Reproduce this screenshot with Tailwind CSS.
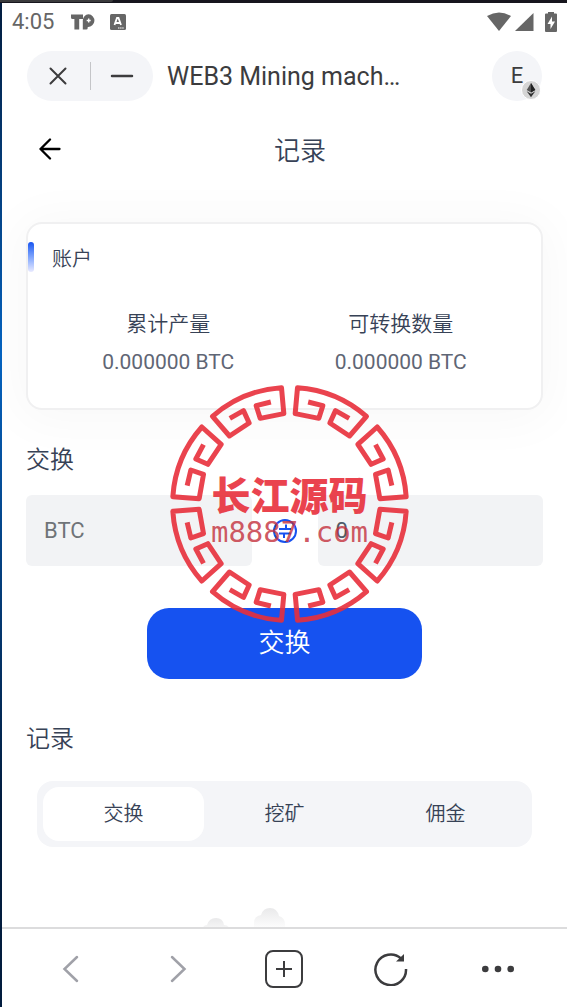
<!DOCTYPE html>
<html lang="zh-CN">
<head>
<meta charset="utf-8">
<meta name="viewport" content="width=device-width, initial-scale=1">
<title>记录</title>
<script src="https://cdn.jsdelivr.net/npm/@tailwindcss/browser@4"></script>
</head>
<body class="bg-white font-['Roboto','Noto_Sans_CJK_SC',sans-serif] text-[#374256]">
<div class="flex h-screen flex-col overflow-hidden">
<div class="h-[3px] flex-none bg-[#17161e]"><div class="h-[2px] w-1/5 rounded-br bg-[#3a3a3c]"></div></div>
<div class="flex min-h-0 flex-1">
<div class="w-[2px] shrink-0 bg-linear-to-b from-[#021c3e] via-[#0563c0] via-35% to-[#021c3e] to-80%"></div>
<div class="relative flex min-w-0 flex-1 flex-col">

  <div class="flex h-[38px] items-center pr-[10px] pl-[10px] text-[#666]">
    <span class="text-[22px] leading-6">4:05</span>
    <svg class="ml-[17px] h-4 w-6" viewBox="0 0 24 16" fill="currentColor" aria-hidden="true">
      <path d="M0 .5h12v4.600H8.200V15.500H3.400V5.100H1.500Q0 5.100 0 3.600Z"/>
      <path fill-rule="evenodd" d="M17.500 .3a6.300 6.300 0 1 1-.8 12.600v1.200q0 1.500-1.500 1.500h-3.400V6.300a6 6 0 0 1 5.700-6ZM17 4.500v1.300h-1.300v1.400h1.300v1.300h1.400V7.200h1.300V5.800h-1.300V4.500Z"/>
    </svg>
    <svg class="ml-[15px] h-4 w-4" viewBox="0 0 16 16" aria-hidden="true"><rect width="16" height="16" rx="1.500" fill="#666"/><path d="M4.500 11 7 4h1.500L11 11M5.500 9h4.500" fill="none" stroke="#fff" stroke-width="1.800"/><path d="M8 14h6" stroke="#fff" stroke-dasharray="1.500 .6"/></svg>
    <svg class="ml-auto h-5 w-6" viewBox="0 0 24 20" fill="currentColor" aria-hidden="true"><path d="M0 4Q12-3 24 4L12 19Z"/></svg>
    <svg class="ml-1 h-5 w-[19px]" viewBox="0 0 19 20" fill="currentColor" aria-hidden="true"><path d="M0 19 18.500 1V19Z"/></svg>
    <svg class="ml-[11px] h-5 w-3" viewBox="0 0 12 20" aria-hidden="true"><path d="M3 0h6v1.500h2q1 0 1 1V19q0 1-1 1H1q-1 0-1-1V2.500q0-1 1-1h2Z" fill="#666"/><path d="M7 4.500 2.500 12h3v5L10 9.500H7Z" fill="#fff"/></svg>
  </div>

  <header class="flex items-center px-[25px] py-[10px]">
    <div class="flex h-[50px] w-[126px] items-center rounded-full bg-[#f4f5f8]">
      <button class="flex h-full flex-1 items-center justify-center" aria-label="关闭"><svg class="h-[18px] w-[18px]" viewBox="0 0 18 18" fill="none" stroke="#3c3c3e" stroke-width="2" stroke-linecap="round"><path d="m1.500 1.500 15 15M16.500 1.500l-15 15"/></svg></button>
      <span class="h-7 w-px bg-[#c4c5c8]"></span>
      <button class="flex h-full flex-1 items-center justify-center" aria-label="最小化"><svg class="h-[18px] w-6" viewBox="0 0 24 18" stroke="#3c3c3e" stroke-width="2.500" stroke-linecap="round"><path d="M2 9h20"/></svg></button>
    </div>
    <span class="ml-[14px] flex-1 pt-[2px] text-[25px] leading-8 text-[#3c3c3e]">WEB3 Mining mach…</span>
    <button class="relative h-[50px] w-[50px] rounded-full bg-[#f4f5f8] text-[22px] leading-6 text-[#3c3c3e]" aria-label="钱包 E">E
      <svg class="absolute right-px bottom-px h-5 w-5" viewBox="0 0 20 20" aria-hidden="true"><circle cx="10" cy="10" r="9.500" fill="#d5d5d5" stroke="#fff"/><path d="m10 3-4.300 7 4.300 2.500 4.300-2.500Z" fill="#555"/><path d="m10 3v9.500l4.300-2.500Z" fill="#222"/><path d="m5.700 11.300 4.300 6 4.300-6-4.300 2.500Z" fill="#333"/></svg>
    </button>
  </header>

  <div class="flex h-[70px] items-center pt-[6px] pr-[50px] pl-[37px]">
    <button class="h-[22px] w-[22px]" aria-label="返回"><svg viewBox="0 0 22 22" fill="none" stroke="#000" stroke-width="2.300" stroke-linecap="round" stroke-linejoin="round"><path d="M20.500 11H1.500M11 1.500 1.500 11l9.500 9.500"/></svg></button>
    <h1 class="flex-1 pt-1 pl-[22px] text-center text-[26px] leading-8 font-[350]">记录</h1>
  </div>

  <main class="flex min-h-0 flex-1 flex-col overflow-hidden px-6 pt-[41px]">
    <section class="flex flex-none flex-col rounded-2xl border-2 border-[#f0f0f1] bg-white pt-[18px] pb-[30px] shadow-[0_4px_50px_8px_rgba(0,0,0,0.03)]">
      <div class="flex h-[30px] items-center">
        <span class="h-[30px] w-[6px] rounded-full bg-linear-to-b from-[#1652f0] to-[#e9eaff]"></span>
        <h2 class="ml-[18px] pt-1 text-[20px] leading-7 font-[350]">账户</h2>
      </div>
      <dl class="mt-[36px] grid grid-cols-2 px-6 text-center">
        <div><dt class="text-[21px] leading-8 font-[350]">累计产量</dt><dd class="mt-[6px] text-[21px] leading-8 text-[#5f6675]">0.000000 BTC</dd></div>
        <div><dt class="text-[21px] leading-8 font-[350]">可转换数量</dt><dd class="mt-[6px] text-[21px] leading-8 text-[#5f6675]">0.000000 BTC</dd></div>
      </dl>
    </section>

    <h2 class="mt-8 text-[24px] leading-9 font-[350]">交换</h2>
    <div class="mt-[17px] flex items-center">
      <input class="h-[71px] w-0 flex-1 rounded-md bg-[#f2f3f5] px-[18px] text-[22px] text-[#6f7378]" aria-label="转出币种" value="BTC">
      <button class="flex w-[66px] justify-center" aria-label="互换"><svg class="h-6 w-6" viewBox="0 0 24 24" fill="none" stroke="#1652f0" stroke-width="2"><circle cx="12" cy="12" r="11"/><path d="M6 10h12M13 5.500V10M18 14.500H6M11 14.500V19"/></svg></button>
      <input class="h-[71px] w-0 flex-1 rounded-md bg-[#f2f3f5] px-[18px] text-[22px] text-[#4f5b69]" aria-label="数量" value="0">
    </div>
    <button class="mx-auto mt-[42px] h-[71px] w-[275px] flex-none rounded-[22px] bg-[#1652f0] text-[26px] font-[350] text-white">交换</button>

    <h2 class="mt-[42px] text-[24px] leading-9 font-[350]">记录</h2>
    <div class="mx-[11px] mt-6 grid flex-none grid-cols-3 rounded-2xl bg-[#f4f5f8] p-[6px] text-[20px] font-[350]" role="tablist">
      <button class="h-[54px] rounded-2xl bg-white" role="tab" aria-selected="true">交换</button>
      <button class="h-[54px]" role="tab" aria-selected="false">挖矿</button>
      <button class="h-[54px]" role="tab" aria-selected="false">佣金</button>
    </div>
    <svg class="mx-auto mt-[56px] h-[120px] w-[200px] flex-none" viewBox="0 0 200 120" aria-hidden="true">
      <defs><linearGradient id="cloud" x1="0" y1="0" x2="0" y2="1"><stop stop-color="#e9e9ea"/><stop offset="1" stop-color="#fff"/></linearGradient></defs>
      <path d="M17 27q1-5 5-5 2-7 9-7t8 7q5 0 6 5v6H17Z" fill="url(#cloud)"/>
      <path d="M69 27v-7q0-7 7-8 2-7 9-7t9 8q6 2 6 8v6Z" fill="url(#cloud)"/>
    </svg>
  </main>

  <nav class="grid h-20 flex-none grid-cols-5 border-t-2 border-[#dcdcdd] bg-white px-4 pt-[2px] text-[#3c3c3e]" aria-label="浏览器">
    <button class="flex items-center justify-center" aria-label="后退"><svg class="h-7 w-7" viewBox="0 0 28 28" fill="none" stroke="#a0a1a8" stroke-width="2.500" stroke-linecap="round"><path d="M20 2 7.500 14 20 26"/></svg></button>
    <button class="flex items-center justify-center" aria-label="前进"><svg class="h-7 w-7" viewBox="0 0 28 28" fill="none" stroke="#a0a1a8" stroke-width="2.500" stroke-linecap="round"><path d="m8 2 12.500 12L8 26"/></svg></button>
    <button class="flex items-center justify-center" aria-label="新标签页"><svg class="h-[38px] w-[38px]" viewBox="0 0 38 38" fill="none" stroke="currentColor" stroke-width="2"><rect x="1" y="1" width="36" height="36" rx="7"/><path d="M11 19h16M19 11v16"/></svg></button>
    <button class="flex items-center justify-center" aria-label="刷新"><svg class="h-[34px] w-[34px]" viewBox="0 0 34 34" fill="none" stroke="currentColor" stroke-width="2.500"><path d="M32 17A15.300 15.300 0 1 1 27 6.500"/><path d="m30 2v7.500h-8Z" fill="currentColor" stroke="none"/></svg></button>
    <button class="flex items-center justify-center" aria-label="更多"><svg class="h-2 w-8" viewBox="0 0 32 8" fill="currentColor"><circle cx="3.300" cy="4" r="3.300"/><circle cx="16" cy="4" r="3.300"/><circle cx="28.700" cy="4" r="3.300"/></svg></button>
  </nav>

  <div class="pointer-events-none absolute top-[372px] left-[158px] h-[258px] w-[259px] text-[#e82f3b] opacity-90">
    <svg class="absolute inset-0 h-full w-full" viewBox="0 0 776 774" fill="none" stroke="currentColor" stroke-width="15" stroke-linejoin="round" aria-hidden="true">
      <defs><path id="fret" d="M332 81 288 92 300 130 371 116 364 38A350 350 0 0 0 157 124L208 183 267 144 250 107 209 130M130 209 107 252 143 268 183 208 125 156A350 350 0 0 0 38 365L117 371 130 298 92 285 81 332"/></defs>
      <use href="#fret"/>
      <use href="#fret" transform="matrix(-1 0 0 1 776 0)"/>
      <use href="#fret" transform="matrix(1 0 0 -1 0 774)"/>
      <use href="#fret" transform="matrix(-1 0 0 -1 776 774)"/>
    </svg>
    <div class="flex h-full flex-col items-center pt-[103px] whitespace-nowrap">
      <span class="text-[39px] leading-[38px] font-black">长江源码</span>
      <span class="font-['DejaVu_Sans_Mono',monospace] text-[29px] leading-8 text-[#c4303c]/90">m8887.com</span>
    </div>
  </div>
</div>
</div>
</div>
</body>
</html>
